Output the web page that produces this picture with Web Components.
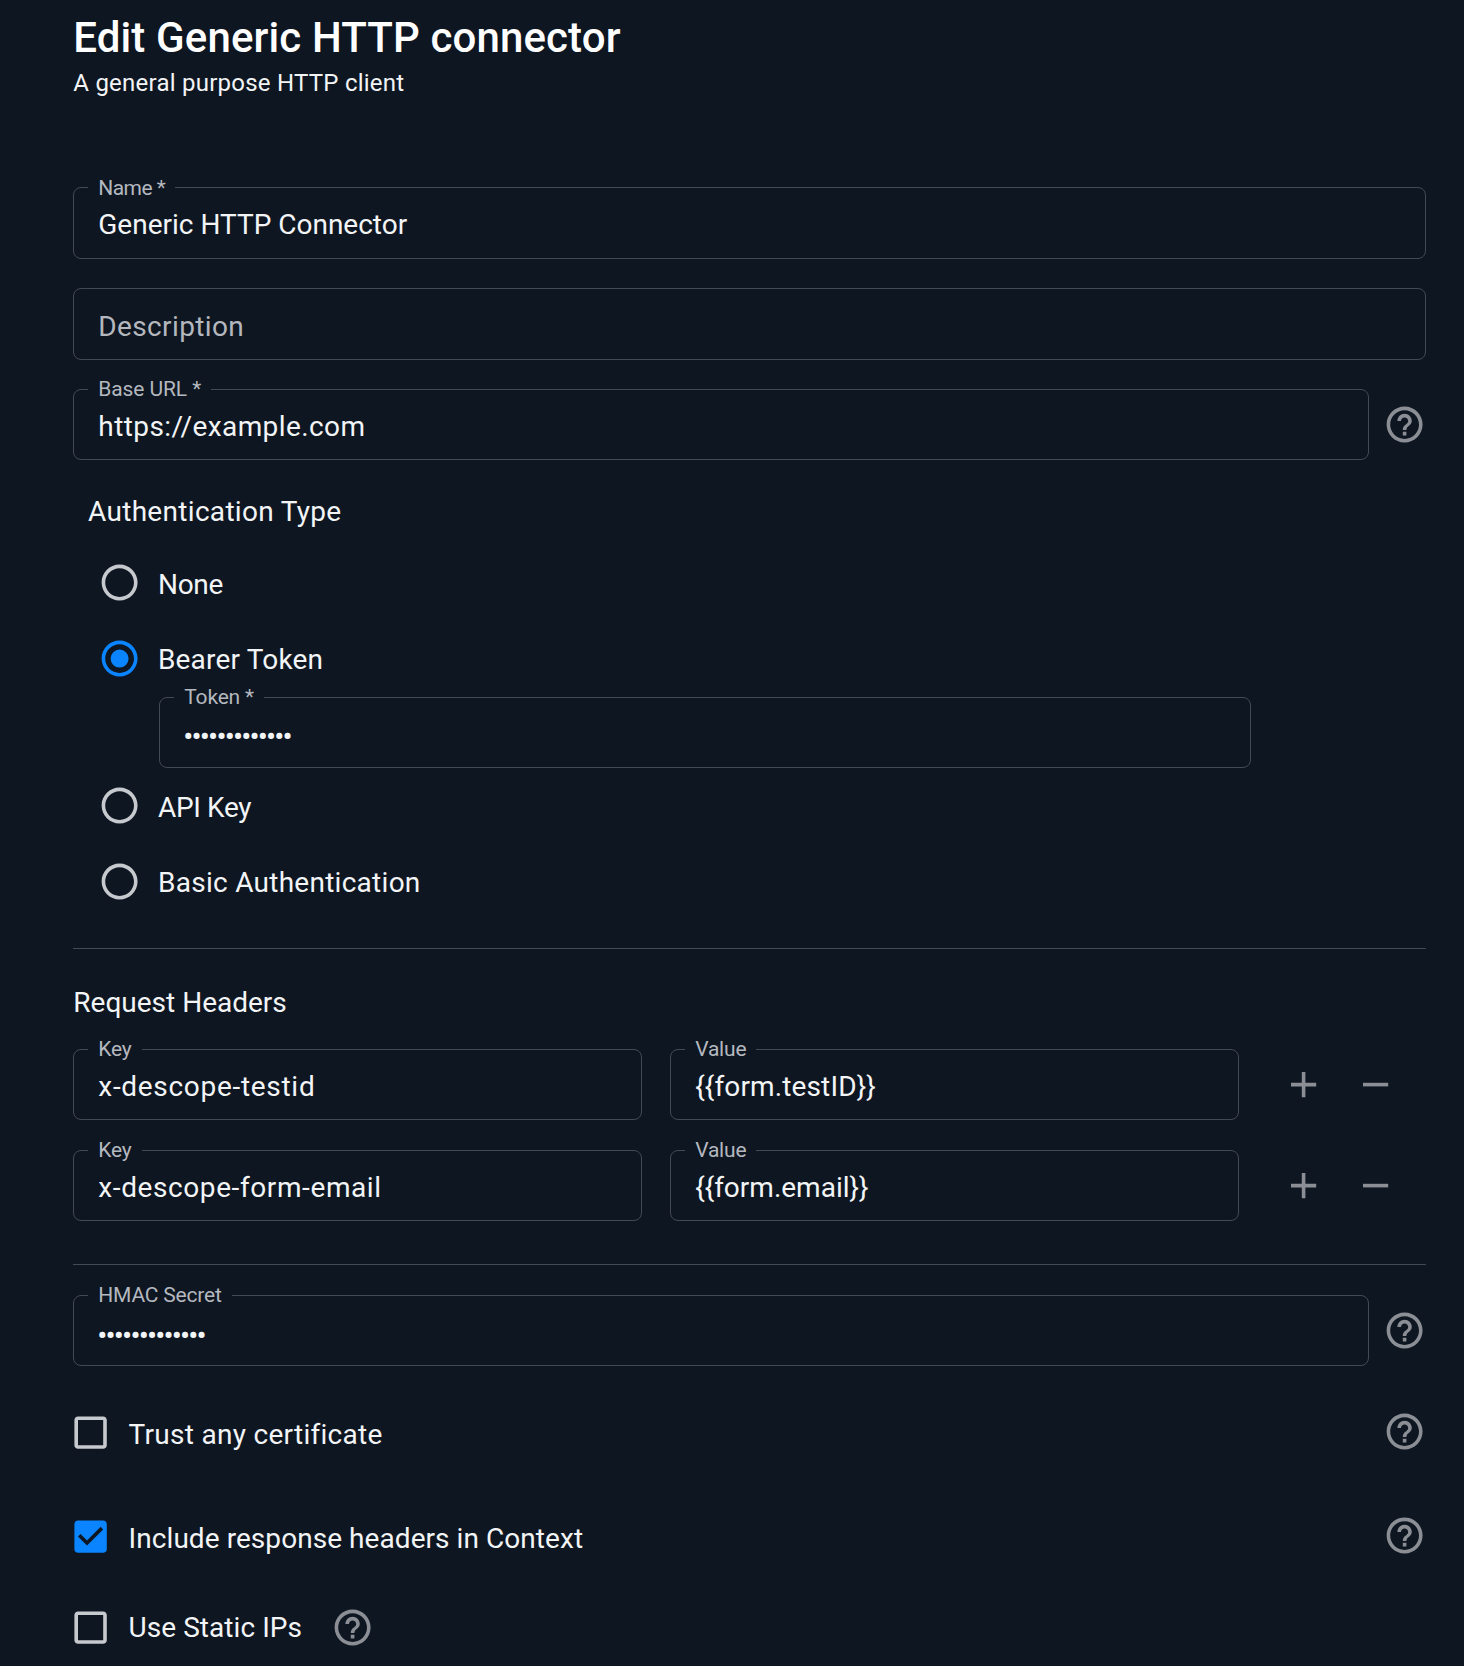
<!doctype html>
<html lang="en"><head><meta charset="utf-8"><title>Edit Generic HTTP connector</title>
<style>
html,body{margin:0;background:#0e1621;}
body{font-family:Roboto,"Liberation Sans",sans-serif;color:#f2f4f6;}
</style></head>
<body>
<x-app>
  <x-page-title heading="Edit Generic HTTP connector" sub="A general purpose HTTP client"></x-page-title>
  <x-field style="margin-top:89.5px;--ltop:-12px;--h:72px" label="Name *" lls="-.55px">Generic HTTP Connector</x-field>
  <x-field style="margin-top:29px;--ty:5px;--h:72px" placeholder><span style="letter-spacing:.37px">Description</span></x-field>
  <x-help-row style="margin-top:29px"><x-field label="Base URL *" lls="-.1px"><span style="letter-spacing:.42px">https://example.com</span></x-field></x-help-row>
  <x-section style="margin:34px 0 14px 14.7px"><span style="letter-spacing:.31px">Authentication Type</span></x-section>
  <x-radio style="--ty:6px"><span style="letter-spacing:-.3px">None</span></x-radio>
  <x-radio checked style="--ty:3px"><span style="letter-spacing:.18px">Bearer Token</span></x-radio>
  <x-field style="margin-left:86px;width:1091.5px;" label="Token *" secret>•••••••••••••</x-field>
  <x-radio style="--ty:4px"><span style="letter-spacing:-.35px">API Key</span></x-radio>
  <x-radio style="--ty:2px"><span style="letter-spacing:.27px">Basic Authentication</span></x-radio>
  <x-divider style="margin-top:28px"></x-divider>
  <x-section style="margin:36px 0 28px 0">Request Headers</x-section>
  <x-kv-row key-text="x-descope-testid" value-text="{{form.testID}}" vls=".14px" kls=".7px"></x-kv-row>
  <x-kv-row style="margin-top:30px" key-text="x-descope-form-email" value-text="{{form.email}}" kls=".6px"></x-kv-row>
  <x-divider style="margin-top:43px"></x-divider>
  <x-help-row style="margin-top:30px"><x-field label="HMAC Secret" secret>•••••••••••••</x-field></x-help-row>
  <x-check style="margin-top:44px;--cy:6px" help="end"><span style="letter-spacing:.28px">Trust any certificate</span></x-check>
  <x-check style="margin-top:60px;--cy:6px" checked help="end"><span style="letter-spacing:.06px">Include response headers in Context</span></x-check>
  <x-check style="margin-top:47px;--cy:2px" help="inline"><span style="letter-spacing:.05px">Use Static IPs</span></x-check>
</x-app>
<script>
const ICON={
 help:'M11 18h2v-2h-2v2zm1-16C6.48 2 2 6.48 2 12s4.48 10 10 10 10-4.48 10-10S17.52 2 12 2zm0 18c-4.41 0-8-3.59-8-8s3.59-8 8-8 8 3.59 8 8-3.59 8-8 8zm0-14c-2.21 0-4 1.79-4 4h2c0-1.1.9-2 2-2s2 .9 2 2c0 2-3 1.75-3 5h2c0-2.25 3-2.5 3-5 0-2.21-1.79-4-4-4z',
 add:'M19 13h-6v6h-2v-6H5v-2h6V5h2v6h6v2z',
 remove:'M19 13H5v-2h14v2z',
 radioOff:'M12 2C6.48 2 2 6.48 2 12s4.48 10 10 10 10-4.48 10-10S17.52 2 12 2zm0 18c-4.42 0-8-3.58-8-8s3.58-8 8-8 8 3.58 8 8-3.58 8-8 8z',
 radioOn:'M12 2C6.48 2 2 6.48 2 12s4.48 10 10 10 10-4.48 10-10S17.52 2 12 2zm0 18c-4.42 0-8-3.58-8-8s3.58-8 8-8 8 3.58 8 8-3.58 8-8 8zm0-13a5 5 0 1 0 0 10 5 5 0 0 0 0-10z',
 checkOff:'M19 5v14H5V5h14m0-2H5c-1.1 0-2 .9-2 2v14c0 1.1.9 2 2 2h14c1.1 0 2-.9 2-2V5c0-1.1-.9-2-2-2z',
 checkOn:'M19 3H5c-1.11 0-2 .9-2 2v14c0 1.1.89 2 2 2h14c1.11 0 2-.9 2-2V5c0-1.1-.89-2-2-2zm-9 14l-5-5 1.41-1.41L10 14.17l7.59-7.59L19 8l-9 9z'
};
const svg=(n,c)=>`<svg width="43.2" height="43.2" viewBox="0 0 24 24" fill="${c}" style="display:block;flex:none"><path d="${ICON[n]}"/></svg>`;
const GREY='#8b8f95';
class Base extends HTMLElement{
  constructor(){super();this.attachShadow({mode:'open'});}
  connectedCallback(){this.shadowRoot.innerHTML=this.render();}
}
customElements.define('x-app',class extends Base{render(){return `<style>
  :host{display:block;box-sizing:border-box;width:1464px;height:1666px;padding:13px 38px 0 73.3px;overflow:hidden}
  </style><slot></slot>`}});
customElements.define('x-page-title',class extends Base{render(){return `<style>
  :host{display:block}
  h1{margin:0;font:500 42px/50px Roboto,sans-serif;letter-spacing:.12px;color:#fff}
  p{margin:4.5px 0 0;font:400 24px/30px Roboto,sans-serif;letter-spacing:.24px;color:#f2f4f6}
  </style><h1>${this.getAttribute('heading')}</h1><p>${this.getAttribute('sub')}</p>`}});
customElements.define('x-field',class extends Base{render(){
  const label=this.getAttribute('label');const ph=this.hasAttribute('placeholder');const secret=this.hasAttribute('secret');
  return `<style>
  :host{display:block;box-sizing:border-box}
  .box{position:relative;box-sizing:border-box;height:var(--h,71px);border:1px solid #434a56;border-radius:8px;display:flex;align-items:center;padding:var(--ty,${secret?10:4}px) 24px 0;
    font:400 28px/36px Roboto,sans-serif;color:${ph?'#b4b8be':'#f2f4f6'};white-space:nowrap}
  .lbl{position:absolute;left:14px;top:var(--ltop,-13px);padding:0 10px;background:#0e1621;font:400 21px/24px Roboto,sans-serif;color:#b4b8bf;letter-spacing:${this.getAttribute('lls')||'-.2px'}}
  .secret{font-size:30px;letter-spacing:-1.85px;color:#f2f4f6;margin-left:-1px}
  </style><div class="box">${label?`<span class="lbl">${label}</span>`:''}<span class="${secret?'secret':''}"><slot></slot></span></div>`}});
customElements.define('x-help',class extends Base{render(){return `<style>:host{display:block;flex:none}</style>${svg('help',GREY)}`}});
customElements.define('x-help-row',class extends Base{render(){return `<style>
  :host{display:flex;align-items:center;gap:13.8px}
  ::slotted(x-field){flex:1;min-width:0}
  </style><slot></slot><x-help></x-help>`}});
customElements.define('x-section',class extends Base{render(){return `<style>
  :host{display:block;font:400 28px/36px Roboto,sans-serif;color:#f2f4f6}
  </style><slot></slot>`}});
customElements.define('x-divider',class extends Base{render(){return `<style>
  :host{display:block;height:1px;background:#434a56}
  </style>`}});
customElements.define('x-radio',class extends Base{render(){const on=this.hasAttribute('checked');return `<style>
  :host{display:flex;align-items:center;height:76.3px;margin-left:24.4px;gap:17.1px;font:400 28px/36px Roboto,sans-serif;color:#f2f4f6}
  span{padding-top:var(--ty,3px)}
  </style>${svg(on?'radioOn':'radioOff',on?'#0a84ff':'#c6c9cd')}<span><slot></slot></span>`}});
customElements.define('x-check',class extends Base{render(){const on=this.hasAttribute('checked');const h=this.getAttribute('help');return `<style>
  :host{display:flex;align-items:center;height:44px;margin-left:-4.4px;gap:16.5px;font:400 28px/36px Roboto,sans-serif;color:#f2f4f6}
  .t{padding-top:var(--cy,2px)}
  .end{margin-left:auto;margin-top:-2px}
  .inline{margin-left:12.5px}
  </style>${svg(on?'checkOn':'checkOff',on?'#0a84ff':'#c6c9cd')}<span class="t"><slot></slot></span><x-help class="${h}"></x-help>`}});
customElements.define('x-icon-btn',class extends Base{render(){return `<style>
  :host{display:flex;align-items:center;justify-content:center;width:72px;height:71px}
  </style>${svg(this.getAttribute('icon'),GREY)}`}});
customElements.define('x-kv-row',class extends Base{render(){return `<style>
  :host{display:flex;gap:28.3px}
  x-field{width:568.6px;flex:none}
  .a{display:flex;margin-left:1px}
  .k{letter-spacing:${this.getAttribute('kls')||0}}
  .v{letter-spacing:${this.getAttribute('vls')||0}}
  </style><x-field label="Key"><span class="k">${this.getAttribute('key-text')}</span></x-field><x-field label="Value"><span class="v">${this.getAttribute('value-text')}</span></x-field><div class="a"><x-icon-btn icon="add"></x-icon-btn><x-icon-btn icon="remove"></x-icon-btn></div>`}});
</script>
</body></html>
